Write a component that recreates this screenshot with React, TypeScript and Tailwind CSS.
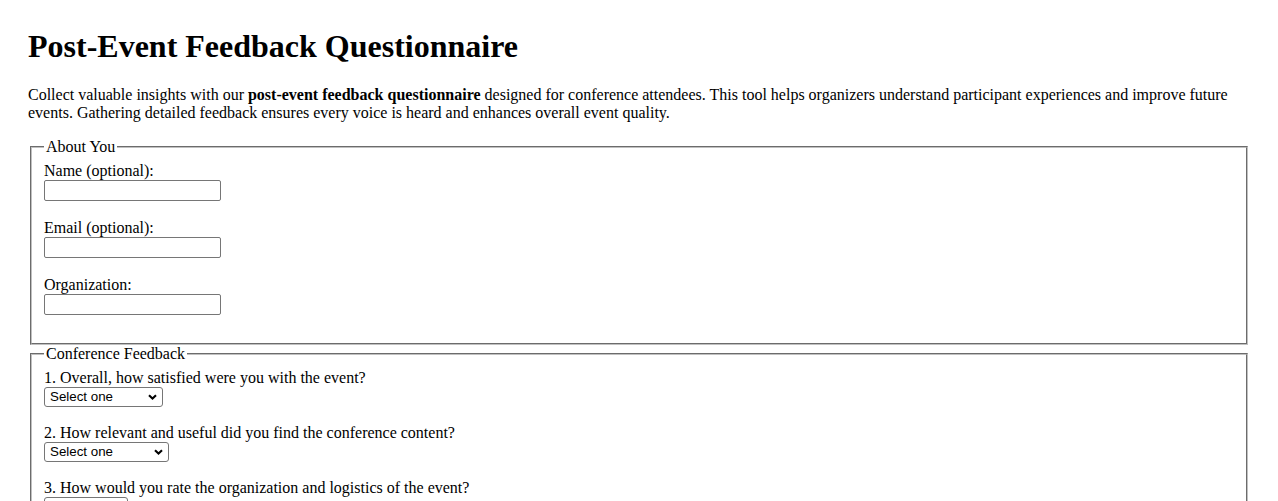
import React from 'react';

const Chevron = () => (
  <svg width="9" height="6" viewBox="0 0 9 6" fill="none" xmlns="http://www.w3.org/2000/svg">
    <path d="M1 1.2l3.5 3.3L8 1.2" stroke="#000" strokeWidth="2.1" />
  </svg>
);

const FakeSelect: React.FC<{ className?: string; label?: string }> = ({ className = '', label = 'Select one' }) => (
  <div
    className={`flex items-center justify-between h-[20px] border border-[#767676] rounded-[3px] bg-white pl-[5px] pr-[5px] font-['Liberation_Sans',Arial,sans-serif] text-[13.33px] leading-none text-black ${className}`}
  >
    <span>{label}</span>
    <Chevron />
  </div>
);

const TextField: React.FC<{ label: string; id: string }> = ({ label, id }) => (
  <div className="flex flex-col items-start mb-[18px]">
    <label htmlFor={id} className="block leading-[18px]">
      {label}
    </label>
    <input
      id={id}
      type="text"
      className="w-[177px] h-[21px] border border-[#767676] rounded-[2px] bg-white px-[2px] text-[13.33px] font-['Liberation_Sans',Arial,sans-serif]"
    />
  </div>
);

const Question: React.FC<{ text: string; selectClass: string }> = ({ text, selectClass }) => (
  <div className="flex flex-col items-start mb-[17px]">
    <label className="block leading-[18px]">{text}</label>
    <FakeSelect className={selectClass} />
  </div>
);

export default function App() {
  return (
    <div className="min-h-screen bg-white text-black font-['Liberation_Serif','Times_New_Roman',serif] text-[16px] px-[28px] pt-[28px]">
      <h1 className="text-[32px] font-bold leading-[37px] mb-[21px]">Post-Event Feedback Questionnaire</h1>
      <p className="leading-[18px] mb-[16px]">
        Collect valuable insights with our <strong className="font-bold">post-event feedback questionnaire</strong> designed
        for conference attendees. This tool helps organizers understand participant experiences and improve future
        events. Gathering detailed feedback ensures every voice is heard and enhances overall event quality.
      </p>
      <form>
        <fieldset className="mx-[2px] px-[12px] pt-[6px] pb-[10px] border-2 [border-style:groove] border-[#c0c0c0]">
          <legend className="px-[2px] leading-[18px]">About You</legend>
          <TextField id="name" label="Name (optional):" />
          <TextField id="email" label="Email (optional):" />
          <TextField id="org" label="Organization:" />
        </fieldset>
        <fieldset className="mx-[2px] px-[12px] pt-[6px] pb-[10px] border-2 [border-style:groove] border-[#c0c0c0]">
          <legend className="px-[2px] leading-[18px]">Conference Feedback</legend>
          <Question text="1. Overall, how satisfied were you with the event?" selectClass="w-[119px]" />
          <Question text="2. How relevant and useful did you find the conference content?" selectClass="w-[125px]" />
          <Question text="3. How would you rate the organization and logistics of the event?" selectClass="w-[84px]" />
        </fieldset>
      </form>
    </div>
  );
}
